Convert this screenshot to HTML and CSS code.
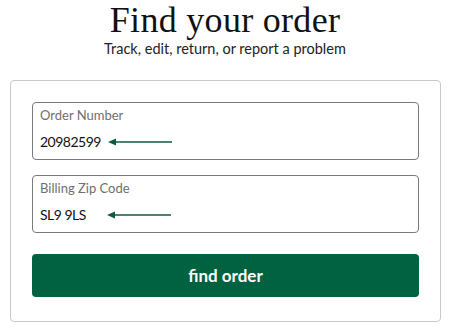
FILE: index.html
```html
<!DOCTYPE html>
<html>
<head>
<meta charset="utf-8">
<link rel="stylesheet" href="styles.css">
</head>
<body>
<header class="head">
  <h1 class="title">Find your order</h1>
  <p class="subtitle">Track, edit, return, or report a problem</p>
</header>
<form class="card">
  <div class="field">
    <span class="label">Order Number</span>
    <span class="value-row"><span class="value">20982599</span>
      <svg class="arrow" width="64" height="8" viewBox="0 0 64 8"><path d="M0 4 L8 0.5 L8 7.5 Z" fill="#0f5a3c"/><line x1="6" y1="4" x2="64" y2="4" stroke="#0f5a3c" stroke-width="1.3"/></svg>
    </span>
  </div>
  <div class="field">
    <span class="label">Billing Zip Code</span>
    <span class="value-row"><span class="value">SL9 9LS</span>
      <svg class="arrow" width="64" height="8" viewBox="0 0 64 8"><path d="M0 4 L8 0.5 L8 7.5 Z" fill="#0f5a3c"/><line x1="6" y1="4" x2="64" y2="4" stroke="#0f5a3c" stroke-width="1.3"/></svg>
    </span>
  </div>
  <button type="button" class="btn">find order</button>
</form>
</body>
</html>
```

FILE: styles.css
```css
* { box-sizing: border-box; }
body {
  margin: 0;
  background: #fff;
  font-family: Lato, "Open Sans", sans-serif;
  color: #111;
  width: 450px;
}
.head {
  display: flex;
  flex-direction: column;
  align-items: center;
}
.title {
  margin: 0;
  font-family: "Liberation Serif", serif;
  font-weight: 400;
  font-size: 36px;
  line-height: 40px;
  color: #111;
  letter-spacing: 0.3px;
}
.subtitle {
  margin: 0;
  font-size: 14.5px;
  line-height: 18px;
  color: #222;
}
.card {
  margin: 22px 0 0 10px;
  width: 431px;
  border: 1px solid #c9c9c9;
  border-radius: 4px;
  padding: 21px 21px 24px 21px;
  display: flex;
  flex-direction: column;
  gap: 15px;
}
.field {
  height: 58px;
  border: 1px solid #7a7a7a;
  border-radius: 4px;
  padding: 4px 7px 0 7px;
  display: flex;
  flex-direction: column;
}
.label {
  font-size: 13px;
  line-height: 16px;
  color: #6f6f6f;
}
.value-row {
  margin-top: 10px;
  display: flex;
  align-items: center;
  gap: 7px;
}
.value {
  min-width: 60px;
  font-size: 14px;
  line-height: 18px;
  letter-spacing: -0.5px;
  color: #111;
}
.arrow { display: block; }
.btn {
  margin-top: 6px;
  height: 43px;
  border: 0;
  border-radius: 4px;
  background: #006241;
  color: #fff;
  font-family: Lato, sans-serif;
  font-weight: 700;
  font-size: 17px;
}
```
